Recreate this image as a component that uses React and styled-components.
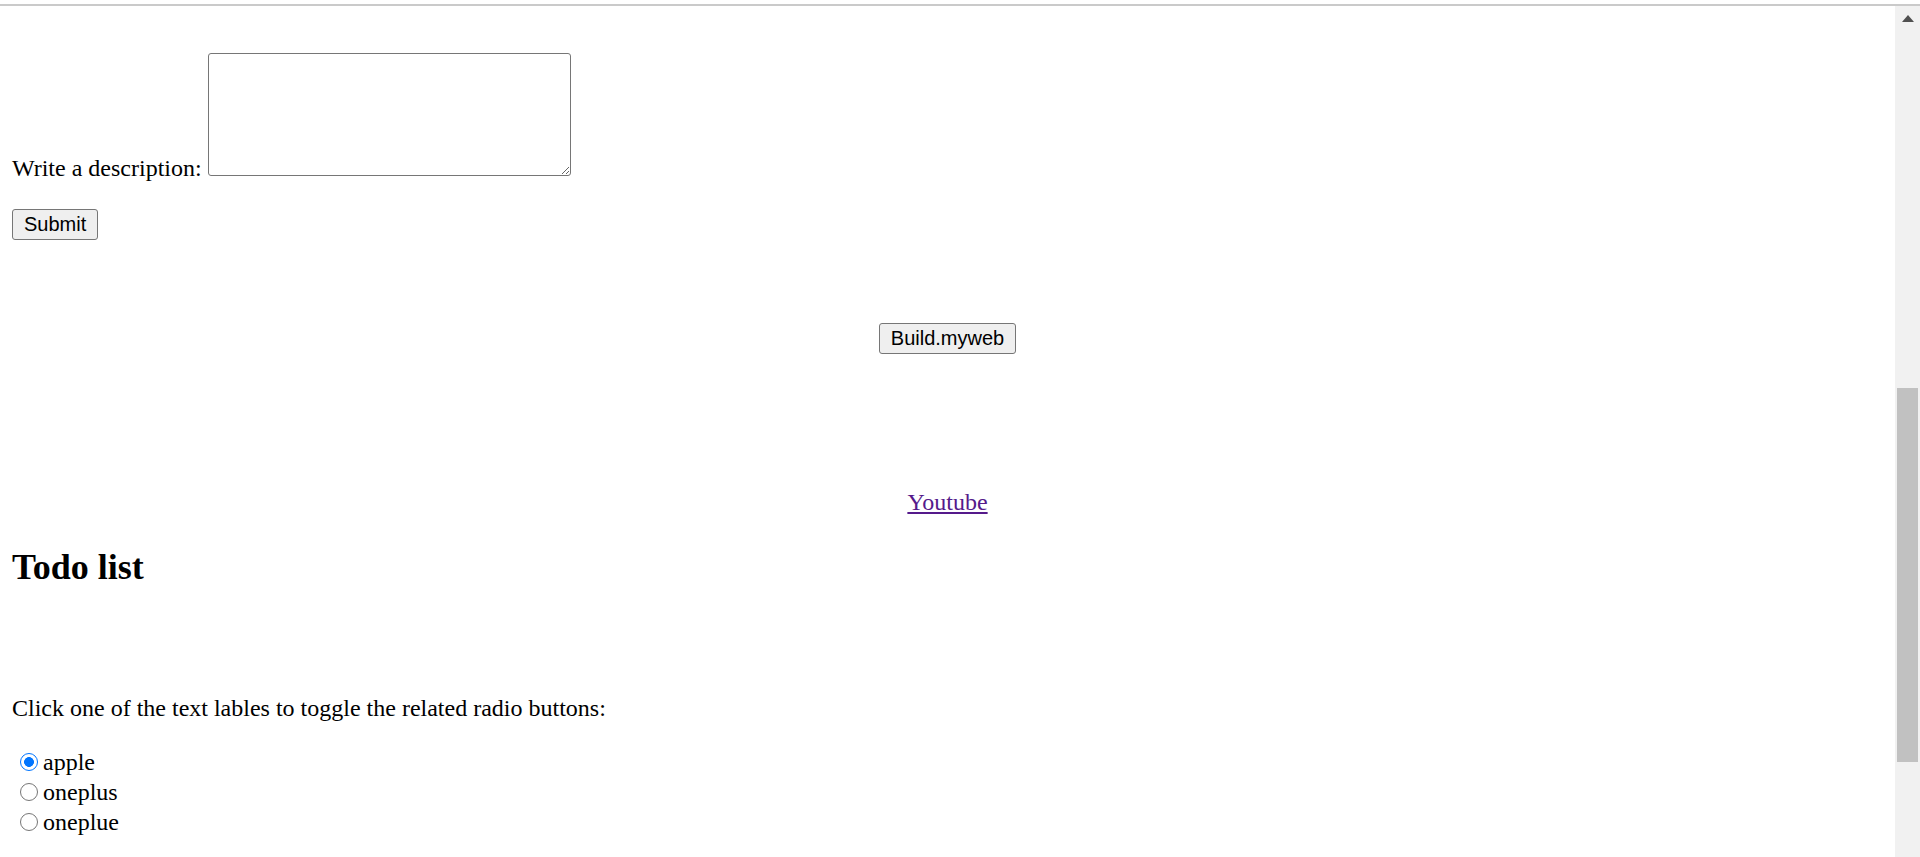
import React from "react";
import styled, { createGlobalStyle } from "styled-components";

const Global = createGlobalStyle`
  html, body { margin: 0; padding: 0; background: #ffffff; overflow: hidden; }
  #root { height: 857px; }
`;

const Frame = styled.div`
  height: 857px;
  display: flex;
  flex-direction: column;
  background: #ffffff;
`;

const ChromeEdge = styled.div`
  height: 4px;
  flex: none;
  border-bottom: 2px solid #cacaca;
  background: #ffffff;
`;

const Viewport = styled.div`
  flex: 1;
  display: flex;
  min-height: 0;
`;

const Content = styled.main`
  flex: 1;
  min-width: 0;
  display: flex;
  flex-direction: column;
  padding: 0 12px;
  font-family: "Liberation Serif", "Times New Roman", serif;
  font-size: 24px;
  color: #000000;
  overflow: hidden;
`;

const DescLine = styled.div`
  margin-top: 47px;
`;

const LabelText = styled.label`
  font-size: 24px;
`;

const TextArea = styled.textarea`
  display: inline-block;
  vertical-align: baseline;
  box-sizing: border-box;
  width: 363px;
  height: 123px;
  margin: 0;
  padding: 3px;
  border: 1px solid #767676;
  border-radius: 3px;
  background: #ffffff;
  font-family: "Liberation Mono", monospace;
  font-size: 20px;
`;

const ButtonRow = styled.div`
  display: flex;
  justify-content: ${(p) => (p.$center ? "center" : "flex-start")};
  margin-top: ${(p) => p.$gap}px;
`;

const NativeButton = styled.button`
  box-sizing: border-box;
  height: 31px;
  padding: 0 11px;
  margin: 0;
  border: 1px solid #767676;
  border-radius: 3px;
  background: #efefef;
  color: #000000;
  font-family: "Liberation Sans", Arial, sans-serif;
  font-size: 20px;
  line-height: 23px;
`;

const LinkRow = styled.div`
  margin-top: 135px;
  text-align: center;
  line-height: 27.6px;
`;

const Link = styled.a`
  color: #551a8b;
  text-decoration: underline;
`;

const Heading = styled.h2`
  margin: 30px 0 0;
  font-size: 36px;
  font-weight: bold;
  line-height: 41.4px;
`;

const Paragraph = styled.p`
  margin: 107px 0 0;
  line-height: 27.6px;
`;

const RadioGroup = styled.div`
  margin-top: 24.8px;
  display: flex;
  flex-direction: column;
`;

const RadioRow = styled.div`
  height: 30px;
  line-height: 30px;
  white-space: nowrap;
`;

const Radio = styled.input`
  appearance: none;
  -webkit-appearance: none;
  box-sizing: border-box;
  width: 18px;
  height: 18px;
  margin: 0 5px 0 8px;
  vertical-align: -1px;
  border: 1.5px solid #767676;
  border-radius: 50%;
  background: #ffffff;
  &:checked {
    border-color: #0075ff;
    background: radial-gradient(circle, #0075ff 0 4.6px, #ffffff 5.2px);
  }
`;

const Scrollbar = styled.aside`
  width: 25px;
  flex: none;
  background: #f1f1f1;
  display: flex;
  flex-direction: column;
  align-items: center;
`;

const ArrowBox = styled.div`
  height: 25px;
  width: 100%;
  display: flex;
  align-items: center;
  justify-content: center;
`;

const Thumb = styled.div`
  width: 21px;
  height: 374px;
  margin-top: 357px;
  background: #c1c1c1;
`;

export default function App() {
  return (
    <Frame>
      <Global />
      <ChromeEdge />
      <Viewport>
        <Content>
          <DescLine>
            <LabelText htmlFor="desc">Write a description:</LabelText>{" "}
            <TextArea id="desc" />
          </DescLine>
          <ButtonRow $gap={27}>
            <NativeButton type="submit">Submit</NativeButton>
          </ButtonRow>
          <ButtonRow $gap={83} $center>
            <NativeButton type="button">Build.myweb</NativeButton>
          </ButtonRow>
          <LinkRow>
            <Link href="#youtube">Youtube</Link>
          </LinkRow>
          <Heading>Todo list</Heading>
          <Paragraph>Click one of the text lables to toggle the related radio buttons:</Paragraph>
          <RadioGroup>
            <RadioRow>
              <Radio type="radio" name="phone" id="apple" defaultChecked />
              <label htmlFor="apple">apple</label>
            </RadioRow>
            <RadioRow>
              <Radio type="radio" name="phone" id="oneplus" />
              <label htmlFor="oneplus">oneplus</label>
            </RadioRow>
            <RadioRow>
              <Radio type="radio" name="phone" id="oneplue" />
              <label htmlFor="oneplue">oneplue</label>
            </RadioRow>
          </RadioGroup>
        </Content>
        <Scrollbar>
          <ArrowBox>
            <svg width="12" height="7" viewBox="0 0 12 7">
              <path d="M6 0 L12 7 L0 7 Z" fill="#505050" />
            </svg>
          </ArrowBox>
          <Thumb />
        </Scrollbar>
      </Viewport>
    </Frame>
  );
}
